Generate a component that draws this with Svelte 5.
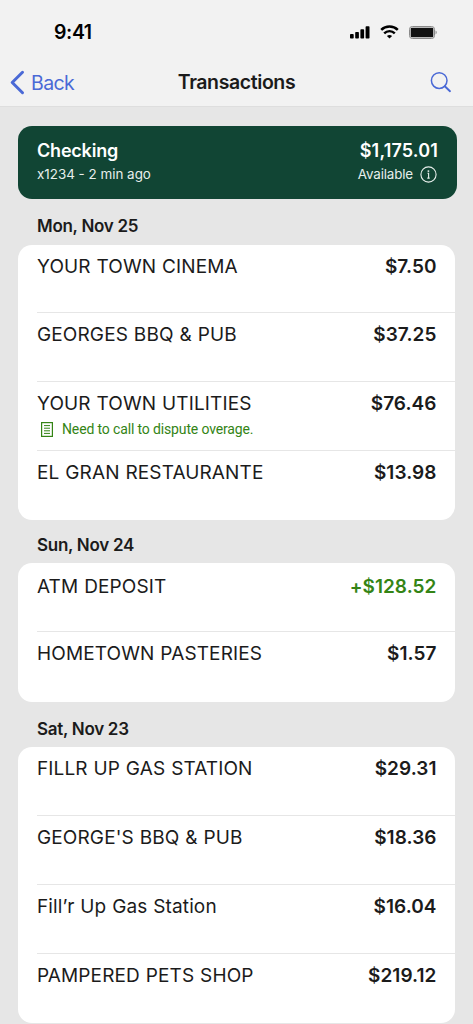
<script>
  const groups = [
    {
      date: 'Mon, Nov 25',
      items: [
        { name: 'YOUR TOWN CINEMA', amount: '$7.50' },
        { name: 'GEORGES BBQ & PUB', amount: '$37.25' },
        { name: 'YOUR TOWN UTILITIES', amount: '$76.46', note: 'Need to call to dispute overage.' },
        { name: 'EL GRAN RESTAURANTE', amount: '$13.98' }
      ]
    },
    {
      date: 'Sun, Nov 24',
      short: true,
      items: [
        { name: 'ATM DEPOSIT', amount: '+$128.52', credit: true },
        { name: 'HOMETOWN PASTERIES', amount: '$1.57' }
      ]
    },
    {
      date: 'Sat, Nov 23',
      items: [
        { name: 'FILLR UP GAS STATION', amount: '$29.31' },
        { name: "GEORGE'S BBQ & PUB", amount: '$18.36' },
        { name: 'Fill’r Up Gas Station', amount: '$16.04' },
        { name: 'PAMPERED PETS SHOP', amount: '$219.12' }
      ]
    }
  ];
</script>

<div class="screen">
  <header>
    <div class="status">
      <span class="time">9:41</span>
      <div class="status-icons">
        <svg width="20" height="13" viewBox="0 0 20 13" fill="#000" aria-hidden="true">
          <rect x="0" y="8" width="3.7" height="4.5" rx="0.8"/>
          <rect x="5.2" y="6" width="3.7" height="6.5" rx="0.8"/>
          <rect x="10.4" y="3.3" width="3.7" height="9.2" rx="0.8"/>
          <rect x="15.6" y="0.3" width="3.9" height="12.2" rx="0.8"/>
        </svg>
        <svg class="wifi" width="19" height="14" viewBox="0 0 19 14" fill="none" stroke="#000" aria-hidden="true">
          <path d="M1.2 4.9a11.8 11.8 0 0 1 16.6 0" stroke-width="2.5"/>
          <path d="M4.2 8.3a7.5 7.5 0 0 1 10.6 0" stroke-width="2.4"/>
          <path d="M6.9 11a4 4 0 0 1 5.2 0L9.5 13.6z" fill="#000" stroke="none"/>
        </svg>
        <svg width="28" height="13" viewBox="0 0 28 13" aria-hidden="true">
          <rect x="0.5" y="0.5" width="25" height="12" rx="2.8" fill="none" stroke="#8a8a8a"/>
          <rect x="1.7" y="1.7" width="22.6" height="9.6" rx="1.3" fill="#111"/>
          <path d="M26.6 4.6v3.8c1.4-.6 1.4-3.2 0-3.8z" fill="#777"/>
        </svg>
      </div>
    </div>
    <nav>
      <button class="back">
        <svg width="15" height="25" viewBox="0 0 15 25" fill="none" stroke="currentColor" stroke-width="3" stroke-linecap="round" stroke-linejoin="round" aria-hidden="true">
          <path d="M12.5 2.3 2.2 12.5 12.5 22.7"/>
        </svg>
        <span>Back</span>
      </button>
      <h1>Transactions</h1>
      <button class="search" aria-label="Search">
        <svg width="22" height="22" viewBox="0 0 22 22" fill="none" stroke="currentColor" stroke-width="1.5" stroke-linecap="round" aria-hidden="true">
          <circle cx="9.2" cy="9.6" r="7.8"/>
          <path d="m14.8 15.2 5.2 5" stroke-width="1.9"/>
        </svg>
      </button>
    </nav>
  </header>

  <main>
    <section class="account">
      <div>
        <div class="account-main">Checking</div>
        <div class="account-sub">x1234 - 2 min ago</div>
      </div>
      <div class="right">
        <div class="account-main balance">$1,175.01</div>
        <div class="account-sub available">
          <span>Available</span>
          <svg width="17" height="17" viewBox="0 0 17 17" fill="none" stroke="currentColor" aria-hidden="true">
            <circle cx="8.5" cy="8.5" r="7.6" stroke-width="1.1"/>
            <path d="M7.5 7.3h1.1v4.8M7.3 12.1h2.4" stroke-width="1.1"/>
            <circle cx="8.4" cy="5.1" r="0.95" fill="currentColor" stroke="none"/>
          </svg>
        </div>
      </div>
    </section>

    {#each groups as group}
      <section class="group" class:short={group.short}>
        <h2>{group.date}</h2>
        <ul>
          {#each group.items as item}
            <li>
              <div class="line">
                <span class="name">{item.name}</span>
                <span class="amount" class:credit={item.credit}>{item.amount}</span>
              </div>
              {#if item.note}
                <div class="note">
                  <svg width="12" height="15" viewBox="0 0 12 15" fill="none" stroke="currentColor" stroke-width="1.2" aria-hidden="true">
                    <rect x="0.6" y="0.6" width="10.8" height="13.8"/>
                    <path d="M3 3.6h6M3 6.2h6M3 8.8h6M3 11.4h6" stroke-width="1"/>
                  </svg>
                  <span>{item.note}</span>
                </div>
              {/if}
            </li>
          {/each}
        </ul>
      </section>
    {/each}
  </main>
</div>

<style>
  :global(body) {
    background: #e6e6e6;
  }

  .screen {
    height: 1024px;
    overflow: hidden;
    background: #e6e6e6;
    color: #1b1b1b;
    font-family: Inter, sans-serif;
  }

  header {
    box-sizing: border-box;
    height: 107px;
    background: #f2f2f2;
    border-bottom: 1px solid #dedede;
  }

  .status {
    display: flex;
    justify-content: space-between;
    align-items: center;
    height: 64px;
    padding: 0 36px 0 54px;
    color: #000;
  }

  .time {
    font-size: 19.5px;
    font-weight: 600;
    letter-spacing: -0.4px;
  }

  .status-icons {
    display: flex;
    align-items: center;
  }

  .wifi {
    margin: 0 10px;
  }

  nav {
    display: grid;
    grid-template-columns: 1fr auto 1fr;
    align-items: center;
    height: 36px;
    padding: 0 21px 0 10px;
  }

  button {
    display: flex;
    align-items: center;
    padding: 0;
    border: none;
    background: none;
    color: #4a69d6;
    font: inherit;
  }

  .back {
    gap: 6px;
    font-size: 19.5px;
    letter-spacing: -0.6px;
  }

  .back span {
    padding-top: 1px;
  }

  .search {
    justify-self: end;
  }

  h1 {
    margin: 0 0 1px 11px;
    font-size: 19.5px;
    font-weight: 600;
    letter-spacing: -0.4px;
  }

  main {
    padding: 19px 18px 0;
  }

  .account {
    display: flex;
    justify-content: space-between;
    box-sizing: border-box;
    width: 439px;
    height: 73px;
    margin-bottom: 1px;
    padding: 13px 18px 0 19px;
    border-radius: 14px;
    background: #114534;
    color: #fff;
  }

  .account-main {
    font-size: 18px;
    font-weight: 600;
    letter-spacing: -0.2px;
    line-height: 24px;
  }

  .balance {
    padding-right: 1px;
    letter-spacing: 0.15px;
    text-align: right;
  }

  .account-sub {
    font-size: 13.4px;
    line-height: 22px;
    color: #e8efec;
  }

  .available {
    display: flex;
    align-items: center;
    justify-content: flex-end;
    gap: 7px;
    padding-right: 2px;
    letter-spacing: -0.15px;
  }

  .group {
    width: 437px;
  }

  h2 {
    height: 45px;
    margin: 0;
    padding-left: 19px;
    font-size: 17px;
    font-weight: 600;
    letter-spacing: -0.28px;
    line-height: 53px;
  }

  .short h2 {
    height: 43px;
    line-height: 50px;
  }

  .group:last-child h2 {
    line-height: 54px;
  }

  ul {
    box-sizing: border-box;
    height: 275px;
    margin: 0;
    padding: 0 0 0 19px;
    border-radius: 14px;
    background: #fff;
    list-style: none;
  }

  .short ul {
    height: 139px;
  }

  .group:last-child ul {
    height: 276px;
  }

  li {
    box-sizing: border-box;
    height: 69px;
    padding: 9px 18.5px 0 0;
    border-bottom: 1px solid #e6e6e6;
  }

  .group:nth-child(2) li:first-child {
    height: 68px;
  }

  .short li:first-child {
    padding-top: 11px;
  }

  li:last-child {
    border-bottom: none;
  }

  .line {
    display: flex;
    justify-content: space-between;
    line-height: 26px;
  }

  .name {
    font-size: 19px;
    letter-spacing: 0.12px;
    word-spacing: 0.4px;
  }

  .amount {
    font-size: 19px;
    font-weight: 600;
    letter-spacing: 0.05px;
  }

  .credit {
    color: #348415;
  }

  .note {
    display: flex;
    align-items: center;
    gap: 9px;
    padding-left: 4px;
    color: #348415;
    font-family: Roboto, sans-serif;
    font-size: 14px;
    letter-spacing: -0.14px;
    line-height: 24px;
  }
</style>
